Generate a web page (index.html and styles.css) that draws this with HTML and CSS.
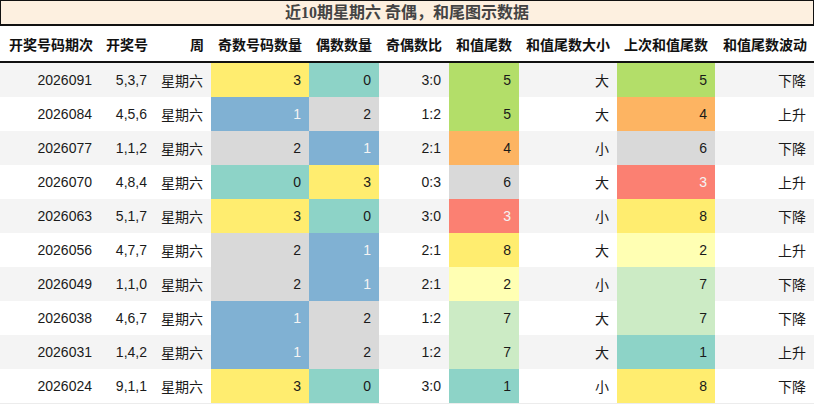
FILE: index.html
```html
<!DOCTYPE html>
<html lang="zh">
<head>
<meta charset="utf-8">
<title>近10期星期六 奇偶，和尾图示数据</title>
<link rel="stylesheet" href="styles.css">
</head>
<body>
<div class="title">近10期星期六 奇偶，和尾图示数据</div>
<table class="data">
  <colgroup>
    <col class="w100"><col class="w55"><col class="w56"><col class="w98"><col class="w70"><col class="w70"><col class="w70"><col class="w98"><col class="w98"><col class="w99">
  </colgroup>
  <thead>
    <tr><th>开奖号码期次</th><th>开奖号</th><th>周</th><th>奇数号码数量</th><th>偶数数量</th><th>奇偶数比</th><th>和值尾数</th><th>和值尾数大小</th><th>上次和值尾数</th><th>和值尾数波动</th></tr>
  </thead>
  <tbody>
    <tr><td>2026091</td><td>5,3,7</td><td>星期六</td><td class="c3">3</td><td class="c0">0</td><td>3:0</td><td class="t5">5</td><td>大</td><td class="t5">5</td><td>下降</td></tr>
    <tr><td>2026084</td><td>4,5,6</td><td>星期六</td><td class="c1">1</td><td class="c2">2</td><td>1:2</td><td class="t5">5</td><td>大</td><td class="t4">4</td><td>上升</td></tr>
    <tr><td>2026077</td><td>1,1,2</td><td>星期六</td><td class="c2">2</td><td class="c1">1</td><td>2:1</td><td class="t4">4</td><td>小</td><td class="t6">6</td><td>下降</td></tr>
    <tr><td>2026070</td><td>4,8,4</td><td>星期六</td><td class="c0">0</td><td class="c3">3</td><td>0:3</td><td class="t6">6</td><td>大</td><td class="t3">3</td><td>上升</td></tr>
    <tr><td>2026063</td><td>5,1,7</td><td>星期六</td><td class="c3">3</td><td class="c0">0</td><td>3:0</td><td class="t3">3</td><td>小</td><td class="t8">8</td><td>下降</td></tr>
    <tr><td>2026056</td><td>4,7,7</td><td>星期六</td><td class="c2">2</td><td class="c1">1</td><td>2:1</td><td class="t8">8</td><td>大</td><td class="t2">2</td><td>上升</td></tr>
    <tr><td>2026049</td><td>1,1,0</td><td>星期六</td><td class="c2">2</td><td class="c1">1</td><td>2:1</td><td class="t2">2</td><td>小</td><td class="t7">7</td><td>下降</td></tr>
    <tr><td>2026038</td><td>4,6,7</td><td>星期六</td><td class="c1">1</td><td class="c2">2</td><td>1:2</td><td class="t7">7</td><td>大</td><td class="t7">7</td><td>下降</td></tr>
    <tr><td>2026031</td><td>1,4,2</td><td>星期六</td><td class="c1">1</td><td class="c2">2</td><td>1:2</td><td class="t7">7</td><td>大</td><td class="t1">1</td><td>上升</td></tr>
    <tr><td>2026024</td><td>9,1,1</td><td>星期六</td><td class="c3">3</td><td class="c0">0</td><td>3:0</td><td class="t1">1</td><td>小</td><td class="t8">8</td><td>下降</td></tr>
  </tbody>
</table>
</body>
</html>
```
FILE: styles.css
```css
html, body {
  margin: 0;
  padding: 0;
  background: #fff;
}
body {
  width: 814px;
  font-family: "Liberation Sans", "Noto Sans CJK SC", sans-serif;
  font-size: 14px;
  color: #1a1a1a;
}
.title {
  box-sizing: border-box;
  height: 26px;
  border: 1px solid #111;
  border-bottom-width: 2px;
  background: #fdf0e0;
  color: #444;
  font-family: "Liberation Serif", "Noto Sans CJK SC", serif;
  font-weight: bold;
  font-size: 16px;
  line-height: 23px;
  text-align: center;
}
.data {
  width: 814px;
  table-layout: fixed;
  border-collapse: collapse;
  border-spacing: 0;
}
.w100 { width: 100px; }
.w55 { width: 55px; }
.w56 { width: 56px; }
.w98 { width: 98px; }
.w70 { width: 70px; }
.w99 { width: 99px; }
.data th {
  height: 35px;
  padding: 0 7px 0 0;
  font-weight: bold;
  color: #111;
  text-align: right;
  border-bottom: 2px solid #111;
  white-space: nowrap;
}
.data td {
  height: 34px;
  padding: 0 8px 0 0;
  text-align: right;
  white-space: nowrap;
}
.data tbody tr:nth-child(odd) { background: #f4f4f4; }
.data tbody tr:nth-child(even) { background: #fff; }
.data tbody tr:last-child td { border-bottom: 1px solid #ececec; }
.c0 { background: #8dd3c7; }
.c1 { background: #80b1d3; color: #f4f4f4; }
.c2 { background: #d9d9d9; }
.c3 { background: #ffed6f; }
.t1 { background: #8dd3c7; }
.t2 { background: #ffffb3; }
.t3 { background: #fb8072; color: #f4f4f4; }
.t4 { background: #fdb462; }
.t5 { background: #b3de69; }
.t6 { background: #d9d9d9; }
.t7 { background: #ccebc5; }
.t8 { background: #ffed6f; }
```
